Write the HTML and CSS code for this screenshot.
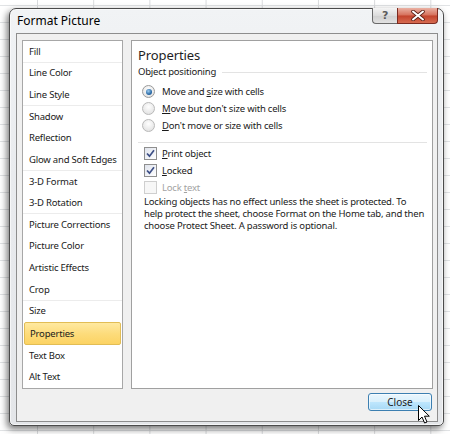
FILE: index.html
```html
<!DOCTYPE html>
<html>
<head>
<meta charset="utf-8">
<link rel="stylesheet" href="styles.css">
</head>
<body>
<div class="window">
  <div class="titlebar">
    <span class="title">Format Picture</span>
    <div class="caption-buttons">
      <div class="cap-btn help">?</div>
      <div class="cap-btn close-x">
        <svg width="14" height="11" viewBox="0 0 14 11"><path d="M2 1.5 L12 9.5 M12 1.5 L2 9.5" stroke="#5a1d14" stroke-width="3.6" stroke-linecap="round"/><path d="M2 1.5 L12 9.5 M12 1.5 L2 9.5" stroke="#ffffff" stroke-width="2" stroke-linecap="round"/></svg>
      </div>
    </div>
  </div>
  <div class="client">
    <div class="panels">
      <ul class="nav">
        <li class="sep">Fill</li>
        <li>Line Color</li>
        <li class="sep">Line Style</li>
        <li>Shadow</li>
        <li>Reflection</li>
        <li class="sep">Glow and Soft Edges</li>
        <li>3-D Format</li>
        <li class="sep">3-D Rotation</li>
        <li>Picture Corrections</li>
        <li>Picture Color</li>
        <li>Artistic Effects</li>
        <li class="sep">Crop</li>
        <li>Size</li>
        <li class="selected">Properties</li>
        <li>Text Box</li>
        <li>Alt Text</li>
      </ul>
      <div class="content">
        <div class="heading">Properties</div>
        <div class="group-label"><span>Object positioning</span><span class="rule"></span></div>
        <div class="radios">
          <div class="opt"><span class="radio checked"></span><span>Move and <u>s</u>ize with cells</span></div>
          <div class="opt"><span class="radio"></span><span><u>M</u>ove but don't size with cells</span></div>
          <div class="opt"><span class="radio"></span><span><u>D</u>on't move or size with cells</span></div>
        </div>
        <div class="divider"></div>
        <div class="checks">
          <div class="opt"><span class="check on"><svg width="11" height="11" viewBox="0 0 11 11"><path d="M2 5.5 L4.5 8.2 L9 2.3" fill="none" stroke="#3d4f86" stroke-width="1.7"/></svg></span><span><u>P</u>rint object</span></div>
          <div class="opt"><span class="check on"><svg width="11" height="11" viewBox="0 0 11 11"><path d="M2 5.5 L4.5 8.2 L9 2.3" fill="none" stroke="#3d4f86" stroke-width="1.7"/></svg></span><span><u>L</u>ocked</span></div>
          <div class="opt disabled"><span class="check"></span><span>Lock <u>t</u>ext</span></div>
        </div>
        <p class="note">Locking objects has no effect unless the sheet is protected. To<br>help protect the sheet, choose Format on the Home tab, and then<br>choose Protect Sheet. A password is optional.</p>
      </div>
    </div>
    <div class="footer">
      <button class="btn">Close</button>
    </div>
  </div>
</div>
<svg class="cursor" width="14" height="20" viewBox="0 0 14 20"><path d="M0.5 0.5 L0.5 15.5 L4 12 L6.6 18 L9 17 L6.5 11.2 L11.3 11.2 Z" fill="#ffffff" stroke="#000000" stroke-width="1" stroke-linejoin="round"/></svg>
</body>
</html>
```

FILE: styles.css
```css
* { box-sizing: border-box; }
html, body { margin: 0; padding: 0; }
body {
  width: 450px;
  height: 434px;
  overflow: hidden;
  position: relative;
  padding: 8px 0 0 9px;
  font-family: "Segoe UI", "Noto Sans", sans-serif;
  font-size: 9.5px;
  letter-spacing: -0.2px;
  color: #1a1a1a;
  background-color: #ffffff;
  background-image:
    linear-gradient(to right, #d9dbdd 1px, transparent 1px),
    linear-gradient(to bottom, #e1e3e5 1px, transparent 1px);
  background-size: 56.2px 100%, 100% 17px;
  background-position: 37px 0, 0 5px;
}
.window {
  width: 435px;
  height: 418px;
  border: 1px solid #4b4b4b;
  border-radius: 7px 7px 5px 5px;
  background: linear-gradient(to bottom, #f1f3f5 0%, #e9ebee 40%, #e4e6e9 100%);
  padding: 0 5px 3px 6px;
  display: flex;
  flex-direction: column;
  box-shadow: -2px 3px 7px rgba(0,0,0,0.55), 0 0 0 1px rgba(255,255,255,0.6) inset;
}
.titlebar {
  height: 24px;
  display: flex;
  align-items: center;
  position: relative;
}
.title {
  padding-left: 1px;
  font-size: 12px;
  letter-spacing: 0;
  color: #000;
  margin-top: -1px;
}
.caption-buttons {
  margin-left: auto;
  align-self: flex-start;
  display: flex;
  margin-right: 0;
  margin-top: -1px;
}
.cap-btn {
  height: 16px;
  border: 1px solid #6a6a6a;
  border-top: none;
  display: flex;
  align-items: center;
  justify-content: center;
}
.help {
  width: 25px;
  border-radius: 0 0 0 4px;
  border-right: none;
  background: linear-gradient(to bottom, #f4f4f4, #dcdcdc 50%, #cfcfcf 51%, #e2e2e2);
  color: #5b5b5b;
  font-size: 11px;
  font-weight: bold;
  font-family: "DejaVu Sans", sans-serif;
  line-height: 1;
}
.close-x {
  width: 41px;
  border-radius: 0 0 4px 0;
  border-color: #7b2a20;
  background: linear-gradient(to bottom, #eab1a3, #d6705b 48%, #c3432c 52%, #d66a50);
}
.client {
  flex: 1;
  min-width: 0;
  border: 1px solid #8d8d8d;
  background: #f0f0f0;
  padding: 6px 4px 0 5px;
  display: flex;
  flex-direction: column;
}
.panels {
  height: 349px;
  display: flex;
  gap: 8px;
}
.nav {
  list-style: none;
  margin: 0;
  padding: 0;
  width: 101px;
  flex: none;
  border: 1px solid #a7a7a7;
  background: #fff;
  display: flex;
  flex-direction: column;
}
.nav li {
  flex: 1;
  display: flex;
  align-items: center;
  padding-left: 6px;
  white-space: nowrap;
  border-bottom: 1px solid transparent;
}
.nav li.sep { border-bottom-color: #ececec; }
.nav li.selected {
  margin: 0 1px;
  padding-left: 5px;
  border: 1px solid #e2bd55;
  border-radius: 2px;
  background: linear-gradient(to bottom, #ffe9a0, #fddc7c 50%, #fcd363);
}
.content {
  flex: 1;
  min-width: 0;
  overflow: hidden;
  border: 1px solid #a0a0a0;
  background: #fff;
  padding: 4px 5px 0 6px;
}
.heading {
  font-size: 13px;
  letter-spacing: -0.1px;
  line-height: 20px;
  color: #1e1e1e;
}
.group-label {
  display: flex;
  align-items: center;
  height: 14px;
  line-height: 14px;
}
.group-label .rule {
  flex: 1;
  height: 1px;
  background: #e3e3e3;
  margin-left: 6px;
}
.radios { margin-top: 4px; }
.opt {
  height: 17px;
  display: flex;
  align-items: center;
  white-space: nowrap;
}
.radios .opt { padding-left: 4px; }
.radio {
  width: 13px;
  height: 13px;
  border-radius: 50%;
  border: 1px solid #b9b9b9;
  background: radial-gradient(circle at 50% 35%, #ffffff, #dcdcdc);
  margin-right: 7px;
  position: relative;
  flex: none;
}
.radio.checked {
  border-color: #9a9a9a;
}
.radio.checked::after {
  content: "";
  position: absolute;
  left: 2.5px;
  top: 2.5px;
  width: 6px;
  height: 6px;
  border-radius: 50%;
  background: radial-gradient(circle at 40% 35%, #9fcdf0, #2a6aa6 60%, #1c4c80);
}
.divider {
  height: 1px;
  background: #e3e3e3;
  margin-top: 8px;
}
.checks { margin-top: 2px; }
.checks .opt { padding-left: 6px; }
.check {
  width: 13px;
  height: 13px;
  border: 1px solid #8f8f8f;
  background: linear-gradient(135deg, #dfe3ec, #ffffff);
  margin-right: 5px;
  display: flex;
  align-items: center;
  justify-content: center;
  flex: none;
}
.opt.disabled { color: #a3a3a3; }
.opt.disabled .check {
  border-color: #cfcfcf;
  background: #f7f7f7;
}
.note {
  margin: 0 0 0 6px;
  line-height: 12px;
  white-space: nowrap;
}
.footer {
  display: flex;
  justify-content: flex-end;
  margin-top: 4px;
  padding-right: 1px;
}
.btn {
  width: 64px;
  height: 18px;
  border: 1px solid #3c7fb1;
  border-radius: 3px;
  background: linear-gradient(to bottom, #eaf6fd, #d9f0fc 50%, #bee6fd 51%, #a7d9f5);
  font-family: inherit;
  font-size: 10px;
  color: #1e1e1e;
  padding: 0;
  box-shadow: inset 0 0 0 1px rgba(255,255,255,0.6);
}
.cursor {
  position: absolute;
  left: 418px;
  top: 405px;
}
```
